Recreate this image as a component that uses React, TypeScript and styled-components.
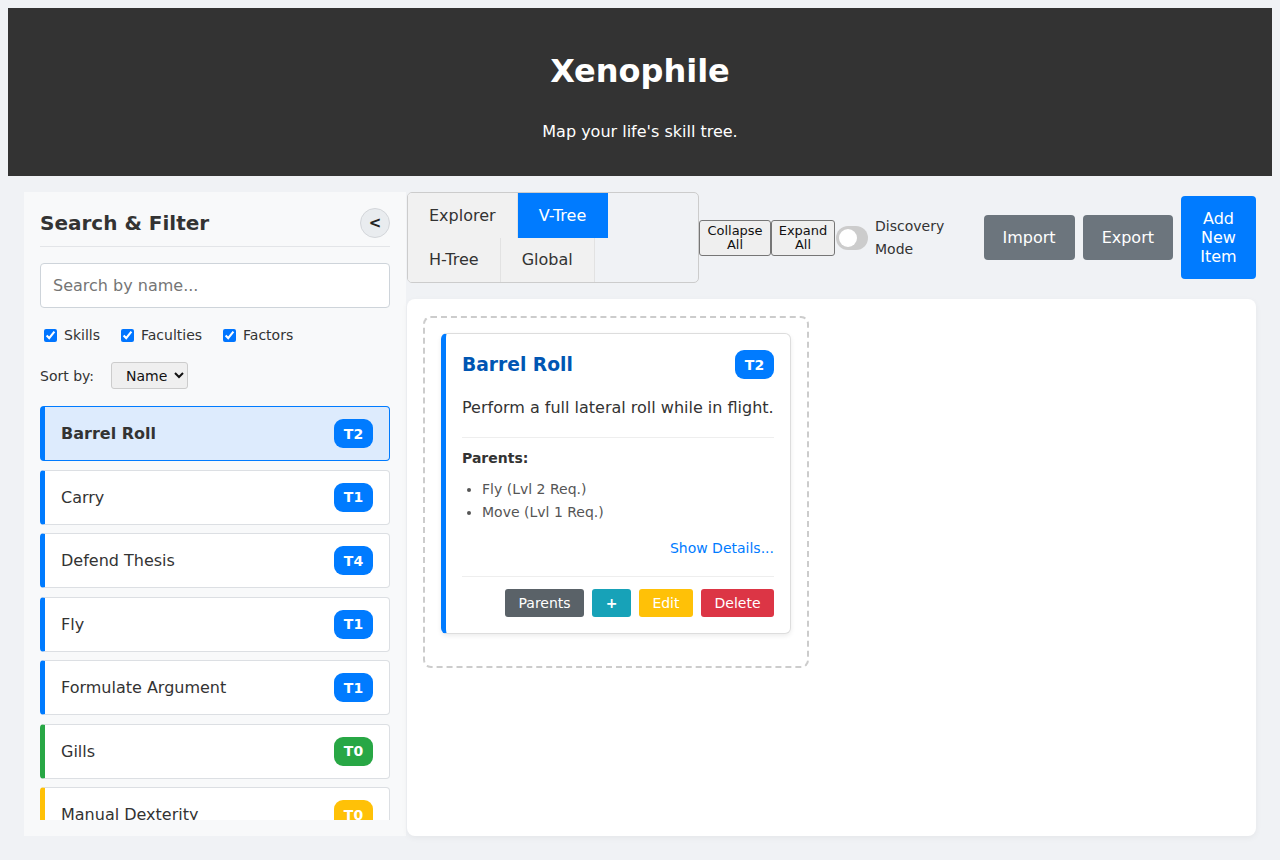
import React, { useState } from "react";
import styled, { createGlobalStyle } from "styled-components";

const GlobalStyle = createGlobalStyle`
  body {
    margin: 8px;
    background: #f0f2f5;
    font-family: "DejaVu Sans", Arial, sans-serif;
    color: #333;
  }
  * { box-sizing: border-box; }
`;

type Tier = { name: string; tier: string; color: string };

const ITEMS: Tier[] = [
  { name: "Barrel Roll", tier: "T2", color: "#007bff" },
  { name: "Carry", tier: "T1", color: "#007bff" },
  { name: "Defend Thesis", tier: "T4", color: "#007bff" },
  { name: "Fly", tier: "T1", color: "#007bff" },
  { name: "Formulate Argument", tier: "T1", color: "#007bff" },
  { name: "Gills", tier: "T0", color: "#28a745" },
  { name: "Manual Dexterity", tier: "T0", color: "#ffc107" },
];

const App: React.FC = () => {
  const [tab, setTab] = useState("V-Tree");
  const [selected, setSelected] = useState("Barrel Roll");
  return (
    <>
      <GlobalStyle />
      <Header>
        <Title>Xenophile</Title>
        <Tagline>Map your life's skill tree.</Tagline>
      </Header>
      <Layout>
        <Sidebar>
          <SidebarHead>
            <SidebarTitle>Search &amp; Filter</SidebarTitle>
            <CollapseBtn>&lt;</CollapseBtn>
          </SidebarHead>
          <SearchInput placeholder="Search by name..." />
          <Filters>
            <Check>
              <input type="checkbox" defaultChecked /> Skills
            </Check>
            <Check>
              <input type="checkbox" defaultChecked /> Faculties
            </Check>
            <Check>
              <input type="checkbox" defaultChecked /> Factors
            </Check>
          </Filters>
          <SortRow>
            Sort by:
            <SortSelect defaultValue="name">
              <option value="name">Name</option>
              <option value="tier">Tier</option>
            </SortSelect>
          </SortRow>
          <List>
            {ITEMS.map((it) => (
              <ListItem
                key={it.name}
                $accent={it.color}
                $active={it.name === selected}
                onClick={() => setSelected(it.name)}
              >
                {it.name}
                <Badge $bg={it.color}>{it.tier}</Badge>
              </ListItem>
            ))}
          </List>
        </Sidebar>
        <Main>
          <Toolbar>
            <Tabs>
              {["Explorer", "V-Tree", "H-Tree", "Global"].map((t) => (
                <Tab key={t} $active={t === tab} onClick={() => setTab(t)}>
                  {t}
                </Tab>
              ))}
            </Tabs>
            <SmallBtn $w={72}>Collapse All</SmallBtn>
            <SmallBtn $w={64}>Expand All</SmallBtn>
            <Switch>
              <Knob />
            </Switch>
            <SwitchLabel>Discovery Mode</SwitchLabel>
            <Actions>
              <ActionBtn $bg="#6c757d">Import</ActionBtn>
              <ActionBtn $bg="#6c757d">Export</ActionBtn>
              <ActionBtn $bg="#007bff" $w={75}>
                Add New Item
              </ActionBtn>
            </Actions>
          </Toolbar>
          <Panel>
            <Group>
              <Card>
                <CardHead>
                  <CardTitle>Barrel Roll</CardTitle>
                  <Badge $bg="#007bff">T2</Badge>
                </CardHead>
                <CardDesc>Perform a full lateral roll while in flight.</CardDesc>
                <CardSection>
                  <SectionLabel>Parents:</SectionLabel>
                  <ParentList>
                    <li>Fly (Lvl 2 Req.)</li>
                    <li>Move (Lvl 1 Req.)</li>
                  </ParentList>
                  <DetailsLink>Show Details...</DetailsLink>
                </CardSection>
                <CardActions>
                  <MiniBtn $bg="#5a6268">Parents</MiniBtn>
                  <MiniBtn $bg="#17a2b8" $bold>
                    +
                  </MiniBtn>
                  <MiniBtn $bg="#ffc107">Edit</MiniBtn>
                  <MiniBtn $bg="#dc3545">Delete</MiniBtn>
                </CardActions>
              </Card>
            </Group>
          </Panel>
        </Main>
      </Layout>
    </>
  );
};

export default App;

const Header = styled.header`
  background: #333;
  color: #fff;
  text-align: center;
  height: 168px;
  padding: 44px 20px 0;
`;

const Title = styled.h1`
  margin: 0 0 32px;
  font-size: 32px;
  line-height: 38px;
  font-weight: 700;
`;

const Tagline = styled.p`
  margin: 0;
  font-size: 16px;
  line-height: 19px;
`;

const Layout = styled.div`
  display: flex;
  height: 676px;
  padding: 16px;
`;

const Sidebar = styled.aside`
  width: 382px;
  flex-shrink: 0;
  background: #f8f9fa;
  padding: 16px;
  display: flex;
  flex-direction: column;
`;

const SidebarHead = styled.div`
  display: flex;
  align-items: center;
  justify-content: space-between;
  padding-bottom: 8px;
  border-bottom: 1px solid #e3e5e8;
  margin-bottom: 16px;
`;

const SidebarTitle = styled.h2`
  margin: 0;
  font-size: 20px;
  font-weight: 700;
  color: #333;
`;

const CollapseBtn = styled.button`
  width: 30px;
  height: 30px;
  border-radius: 50%;
  border: 1px solid #d3d6da;
  background: #e9ecef;
  font-family: "DejaVu Sans", sans-serif;
  font-size: 15px;
  font-weight: 700;
  color: #222;
  padding: 0;
  cursor: pointer;
`;

const SearchInput = styled.input`
  width: 100%;
  height: 45px;
  padding: 10px 12px;
  border: 1px solid #ced4da;
  border-radius: 4px;
  font-family: "DejaVu Sans", sans-serif;
  font-size: 16px;
  color: #333;
  &::placeholder {
    color: #757575;
  }
`;

const Filters = styled.div`
  display: flex;
  gap: 21px;
  margin-top: 19px;
  padding-left: 4px;
`;

const Check = styled.label`
  display: flex;
  align-items: center;
  gap: 3px;
  font-size: 14px;
  color: #333;
  input {
    margin: 0 4px 0 0;
    width: 13px;
    height: 13px;
    accent-color: #0075ff;
  }
`;

const SortRow = styled.div`
  display: flex;
  align-items: center;
  gap: 17px;
  margin-top: 19px;
  font-size: 14px;
  color: #333;
`;

const SortSelect = styled.select`
  width: 77px;
  height: 27px;
  padding: 0 4px 0 10px;
  font-family: "DejaVu Sans", sans-serif;
  font-size: 14px;
  background: #efefef;
  border: 1px solid #ccc;
  border-radius: 3px;
  color: #111;
`;

const List = styled.div`
  margin-top: 17px;
  display: flex;
  flex-direction: column;
  gap: 8.5px;
  overflow: hidden;
  flex: 1;
`;

const ListItem = styled.div<{ $accent: string; $active?: boolean }>`
  flex-shrink: 0;
  height: 55px;
  display: flex;
  align-items: center;
  justify-content: space-between;
  padding: 0 16px;
  background: ${(p) => (p.$active ? "#ddebfd" : "#fff")};
  border: 1px solid ${(p) => (p.$active ? "#007bff" : "#dcdfe3")};
  border-left: 5px solid ${(p) => p.$accent};
  border-radius: 4px;
  font-size: 16px;
  font-weight: ${(p) => (p.$active ? 700 : 400)};
  color: #333;
  cursor: pointer;
`;

const Badge = styled.span<{ $bg: string }>`
  display: inline-flex;
  align-items: center;
  justify-content: center;
  width: 39px;
  height: 29px;
  border-radius: 9px;
  background: ${(p) => p.$bg};
  color: #fff;
  font-size: 14px;
  font-weight: 700;
`;

const Main = styled.main`
  flex: 1;
  margin-left: 1px;
  display: flex;
  flex-direction: column;
  gap: 16px;
  min-width: 0;
`;

const Toolbar = styled.div`
  display: flex;
  align-items: center;
`;

const Tabs = styled.div`
  width: 292px;
  height: 91px;
  display: flex;
  flex-wrap: wrap;
  align-content: flex-start;
  border: 1px solid #ccc;
  border-radius: 5px;
  overflow: hidden;
`;

const Tab = styled.button<{ $active?: boolean }>`
  height: 44.5px;
  padding: 0 21px;
  border: none;
  border-right: 1px solid ${(p) => (p.$active ? "#007bff" : "#e2e2e2")};
  background: ${(p) => (p.$active ? "#007bff" : "#f1f1f1")};
  color: ${(p) => (p.$active ? "#fff" : "#333")};
  font-family: "DejaVu Sans", sans-serif;
  font-size: 16px;
  cursor: pointer;
`;

const SmallBtn = styled.button<{ $w: number }>`
  width: ${(p) => p.$w}px;
  height: 36px;
  padding: 0 2px;
  background: #efefef;
  border: 1px solid #767676;
  border-radius: 3px;
  font-family: "DejaVu Sans", sans-serif;
  font-size: 13px;
  line-height: 14px;
  color: #111;
  cursor: pointer;
`;

const Switch = styled.div`
  width: 32px;
  height: 24px;
  margin-left: 1px;
  border-radius: 12px;
  background: #ccc;
  display: flex;
  align-items: center;
  padding: 0 3px;
`;

const Knob = styled.span`
  width: 18px;
  height: 18px;
  border-radius: 50%;
  background: #fff;
`;

const SwitchLabel = styled.span`
  width: 80px;
  margin-left: 7px;
  font-size: 14px;
  line-height: 23px;
  color: #333;
`;

const Actions = styled.div`
  margin-left: auto;
  display: flex;
  align-items: center;
  gap: 8px;
`;

const ActionBtn = styled.button<{ $bg: string; $w?: number }>`
  ${(p) => (p.$w ? `width: ${p.$w}px;` : "")}
  padding: ${(p) => (p.$w ? "10px 4px" : "0 19px")};
  height: ${(p) => (p.$w ? "83px" : "45px")};
  background: ${(p) => p.$bg};
  color: #fff;
  border: none;
  border-radius: 4px;
  font-family: "DejaVu Sans", sans-serif;
  font-size: 16px;
  line-height: 19px;
  cursor: pointer;
`;

const Panel = styled.section`
  flex: 1;
  background: #fff;
  border-radius: 8px;
  box-shadow: 0 2px 6px rgba(0, 0, 0, 0.05);
  padding: 17px 16px;
  display: flex;
  align-items: flex-start;
`;

const Group = styled.div`
  border: 2px dashed #ccc;
  border-radius: 8px;
  padding: 15px 16px 32px;
`;

const Card = styled.div`
  width: 350px;
  background: #fff;
  border: 1px solid #ddd;
  border-left: 5px solid #007bff;
  border-radius: 6px;
  box-shadow: 0 2px 5px rgba(0, 0, 0, 0.08);
  padding: 16px 16px 16px;
`;

const CardHead = styled.div`
  display: flex;
  align-items: center;
  justify-content: space-between;
`;

const CardTitle = styled.h3`
  margin: 0;
  font-size: 18.7px;
  font-weight: 700;
  color: #0056b3;
`;

const CardDesc = styled.p`
  margin: 19px 0 0;
  font-size: 16px;
  color: #333;
  padding-bottom: 20px;
  border-bottom: 1px solid #eee;
`;

const CardSection = styled.div`
  padding-top: 12px;
  padding-bottom: 20px;
  border-bottom: 1px solid #eee;
`;

const SectionLabel = styled.div`
  font-size: 14px;
  font-weight: 700;
  color: #333;
`;

const ParentList = styled.ul`
  margin: 12px 0 0;
  padding-left: 20px;
  font-size: 14px;
  line-height: 23px;
  color: #555;
`;

const DetailsLink = styled.div`
  margin-top: 16px;
  text-align: right;
  font-size: 14px;
  color: #007bff;
  cursor: pointer;
`;

const CardActions = styled.div`
  display: flex;
  justify-content: flex-end;
  gap: 8px;
  padding-top: 12px;
`;

const MiniBtn = styled.button<{ $bg: string; $bold?: boolean }>`
  height: 28px;
  padding: 0 13.5px;
  background: ${(p) => p.$bg};
  color: #fff;
  border: none;
  border-radius: 3px;
  font-family: "DejaVu Sans", sans-serif;
  font-size: 14px;
  font-weight: ${(p) => (p.$bold ? 700 : 400)};
  cursor: pointer;
`;
